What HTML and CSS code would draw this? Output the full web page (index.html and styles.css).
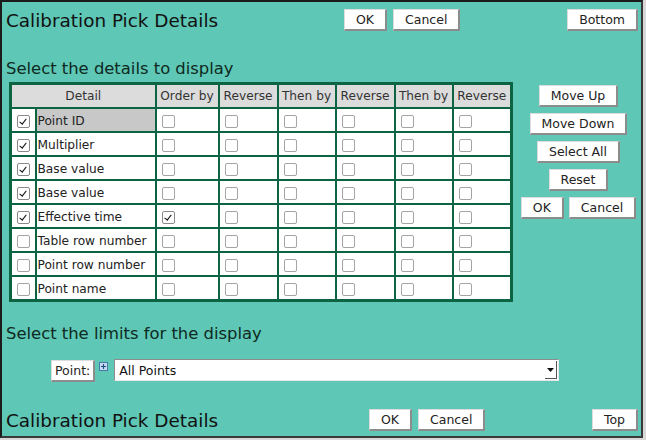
FILE: index.html
```html
<!DOCTYPE html>
<html>
<head>
<meta charset="utf-8">
<link rel="stylesheet" href="styles.css">
</head>
<body>
<div class="frame">
  <div class="bar bar-top">
    <div class="title">Calibration Pick Details</div>
    <div class="btn-group">
      <button class="btn">OK</button>
      <button class="btn">Cancel</button>
    </div>
    <div class="bar-end"><button class="btn">Bottom</button></div>
  </div>

  <h2 class="section">Select the details to display</h2>

  <div class="main">
    <table class="grid">
      <colgroup>
        <col class="c-chk"><col class="c-detail"><col class="c-a"><col class="c-b"><col class="c-c"><col class="c-b"><col class="c-c"><col class="c-b">
      </colgroup>
      <thead>
        <tr>
          <th colspan="2">Detail</th>
          <th>Order by</th><th>Reverse</th><th>Then by</th><th>Reverse</th><th>Then by</th><th>Reverse</th>
        </tr>
      </thead>
      <tbody>
        <tr>
          <td class="cc"><input type="checkbox" class="cb" checked></td>
          <td class="name sel">Point ID</td>
          <td class="ck"><input type="checkbox" class="cb"></td><td class="ck"><input type="checkbox" class="cb"></td><td class="ck"><input type="checkbox" class="cb"></td><td class="ck"><input type="checkbox" class="cb"></td><td class="ck"><input type="checkbox" class="cb"></td><td class="ck"><input type="checkbox" class="cb"></td>
        </tr>
        <tr>
          <td class="cc"><input type="checkbox" class="cb" checked></td>
          <td class="name">Multiplier</td>
          <td class="ck"><input type="checkbox" class="cb"></td><td class="ck"><input type="checkbox" class="cb"></td><td class="ck"><input type="checkbox" class="cb"></td><td class="ck"><input type="checkbox" class="cb"></td><td class="ck"><input type="checkbox" class="cb"></td><td class="ck"><input type="checkbox" class="cb"></td>
        </tr>
        <tr>
          <td class="cc"><input type="checkbox" class="cb" checked></td>
          <td class="name">Base value</td>
          <td class="ck"><input type="checkbox" class="cb"></td><td class="ck"><input type="checkbox" class="cb"></td><td class="ck"><input type="checkbox" class="cb"></td><td class="ck"><input type="checkbox" class="cb"></td><td class="ck"><input type="checkbox" class="cb"></td><td class="ck"><input type="checkbox" class="cb"></td>
        </tr>
        <tr>
          <td class="cc"><input type="checkbox" class="cb" checked></td>
          <td class="name">Base value</td>
          <td class="ck"><input type="checkbox" class="cb"></td><td class="ck"><input type="checkbox" class="cb"></td><td class="ck"><input type="checkbox" class="cb"></td><td class="ck"><input type="checkbox" class="cb"></td><td class="ck"><input type="checkbox" class="cb"></td><td class="ck"><input type="checkbox" class="cb"></td>
        </tr>
        <tr>
          <td class="cc"><input type="checkbox" class="cb" checked></td>
          <td class="name">Effective time</td>
          <td class="ck"><input type="checkbox" class="cb" checked></td><td class="ck"><input type="checkbox" class="cb"></td><td class="ck"><input type="checkbox" class="cb"></td><td class="ck"><input type="checkbox" class="cb"></td><td class="ck"><input type="checkbox" class="cb"></td><td class="ck"><input type="checkbox" class="cb"></td>
        </tr>
        <tr>
          <td class="cc"><input type="checkbox" class="cb"></td>
          <td class="name">Table row number</td>
          <td class="ck"><input type="checkbox" class="cb"></td><td class="ck"><input type="checkbox" class="cb"></td><td class="ck"><input type="checkbox" class="cb"></td><td class="ck"><input type="checkbox" class="cb"></td><td class="ck"><input type="checkbox" class="cb"></td><td class="ck"><input type="checkbox" class="cb"></td>
        </tr>
        <tr>
          <td class="cc"><input type="checkbox" class="cb"></td>
          <td class="name">Point row number</td>
          <td class="ck"><input type="checkbox" class="cb"></td><td class="ck"><input type="checkbox" class="cb"></td><td class="ck"><input type="checkbox" class="cb"></td><td class="ck"><input type="checkbox" class="cb"></td><td class="ck"><input type="checkbox" class="cb"></td><td class="ck"><input type="checkbox" class="cb"></td>
        </tr>
        <tr>
          <td class="cc"><input type="checkbox" class="cb"></td>
          <td class="name">Point name</td>
          <td class="ck"><input type="checkbox" class="cb"></td><td class="ck"><input type="checkbox" class="cb"></td><td class="ck"><input type="checkbox" class="cb"></td><td class="ck"><input type="checkbox" class="cb"></td><td class="ck"><input type="checkbox" class="cb"></td><td class="ck"><input type="checkbox" class="cb"></td>
        </tr>
      </tbody>
    </table>

    <div class="side">
      <button class="btn">Move Up</button>
      <button class="btn">Move Down</button>
      <button class="btn">Select All</button>
      <button class="btn">Reset</button>
      <div class="pair">
        <button class="btn">OK</button>
        <button class="btn">Cancel</button>
      </div>
    </div>
  </div>

  <h2 class="section section-limits">Select the limits for the display</h2>

  <div class="limits">
    <button class="btn btn-small">Point:</button>
    <svg class="plus" width="9" height="9" viewBox="0 0 9 9">
      <rect x="0.5" y="0.5" width="8" height="8" fill="#c6dcf0" stroke="#4a78a8"/>
      <path d="M4.5 2v5M2 4.5h5" stroke="#1f4f86" stroke-width="1.2"/>
    </svg>
    <div class="combo">
      <select class="combo-select"><option>All Points</option></select>
      <span class="combo-arrow"><svg width="7" height="4" viewBox="0 0 7 4"><path d="M0 0h7L3.5 4z" fill="#111"/></svg></span>
    </div>
  </div>

  <div class="bar bar-bottom">
    <div class="title">Calibration Pick Details</div>
    <div class="btn-group">
      <button class="btn">OK</button>
      <button class="btn">Cancel</button>
    </div>
    <div class="bar-end"><button class="btn">Top</button></div>
  </div>
</div>
</body>
</html>
```

FILE: styles.css
```css
html, body {
  margin: 0;
  padding: 0;
  background: #d8d8d8;
}

body {
  font-family: "DejaVu Sans", Verdana, sans-serif;
  width: 646px;
  height: 440px;
  overflow: hidden;
}

.frame {
  box-sizing: border-box;
  width: 643px;
  height: 438px;
  background: #5ec7b5;
  border-left: 2px solid #1c1c1c;
  border-top: 2px solid #1c1c1c;
  border-right: 2px solid #3a3a3a;
  border-bottom: 2px solid #3a3a3a;
  padding: 7px 3px 0 4px;
}

.bar {
  display: flex;
  align-items: center;
  height: 22px;
}

.title {
  font-size: 18.4px;
  color: #111;
  white-space: nowrap;
}

.bar-top .title {
  width: 338px;
}

.bar-bottom {
  margin-top: 27px;
}

.bar-bottom .title {
  width: 363px;
}

.btn-group {
  display: flex;
  gap: 6px;
}

.bar-end {
  margin-left: auto;
  display: flex;
}

.btn {
  font-family: "DejaVu Sans", Verdana, sans-serif;
  font-size: 12.5px;
  color: #222;
  background: #fff;
  height: 22px;
  padding: 0 11px;
  margin: 0;
  border-style: solid;
  border-width: 1px 2px 2px 1px;
  border-color: #dcdcdc #8c8c8c #8c8c8c #dcdcdc;
  border-radius: 0;
  line-height: 18px;
  white-space: nowrap;
}

.btn-small {
  padding: 0 3px;
}

.section {
  margin: 28px 0 0 0;
  font-size: 16.4px;
  font-weight: normal;
  color: #0e2a22;
  line-height: 19px;
}

.section-limits {
  margin-top: 22px;
}

.main {
  display: flex;
  align-items: flex-start;
  margin-top: 4px;
}

.grid {
  margin-left: 3px;
  border-collapse: collapse;
  table-layout: fixed;
  border: 3px solid #0d6443;
  font-size: 12.2px;
  color: #222;
}

.c-chk { width: 25px; }
.c-detail { width: 120px; }
.c-a { width: 63px; }
.c-b { width: 59px; }
.c-c { width: 58px; }

.grid th,
.grid td {
  border: 2px solid #0d6443;
  padding: 0;
  height: 22px;
  white-space: nowrap;
  overflow: hidden;
}

.grid th {
  background: #dcdcdc;
  color: #333;
  font-weight: normal;
  text-align: center;
}

.grid td {
  background: #fff;
}

.grid td.name {
  padding: 2px 0 0 1px;
  height: 20px;
}

.grid td.sel {
  background: #c8c8c8;
}

.grid td.cc {
  text-align: center;
}

.grid td.ck {
  padding-left: 5px;
}

.cb {
  -webkit-appearance: none;
  appearance: none;
  box-sizing: border-box;
  width: 13px;
  height: 13px;
  margin: 0;
  border: 1px solid #a4a4a4;
  border-radius: 2px;
  background: #fff;
  vertical-align: middle;
  position: relative;
  top: 1px;
  display: inline-block;
}

.cb:checked {
  border-color: #8a8a8a;
}

.cb:checked::after {
  content: "";
  position: absolute;
  left: 3.5px;
  top: 1px;
  width: 2.5px;
  height: 6px;
  border-right: 1.6px solid #111;
  border-bottom: 1.6px solid #111;
  transform: rotate(38deg);
}

.side {
  margin-left: 8px;
  margin-top: 3px;
  width: 115px;
  display: flex;
  flex-direction: column;
  align-items: center;
  gap: 6px;
}

.pair {
  display: flex;
  gap: 5px;
}

.limits {
  display: flex;
  align-items: flex-start;
  margin-top: 17px;
  padding-left: 45px;
}

.plus {
  margin: 2px 0 0 4px;
  flex: none;
}

.combo {
  margin-left: 6px;
  margin-top: -1px;
  box-sizing: border-box;
  width: 445px;
  height: 22px;
  display: flex;
  align-items: stretch;
  background: #fff;
  border-style: solid;
  border-width: 1px;
  border-color: #8c8c8c #e8e8e8 #e8e8e8 #8c8c8c;
}

.combo-select {
  -webkit-appearance: none;
  appearance: none;
  flex: 1;
  border: none;
  background: transparent;
  font-family: "DejaVu Sans", Verdana, sans-serif;
  font-size: 12.5px;
  color: #111;
  padding: 0 0 0 4px;
  margin: 0;
  outline: none;
}

.combo-arrow {
  width: 11px;
  margin: 1px 1px 1px 0;
  display: flex;
  align-items: center;
  justify-content: center;
  border-right: 1px solid #555;
  border-bottom: 1px solid #555;
}
```
